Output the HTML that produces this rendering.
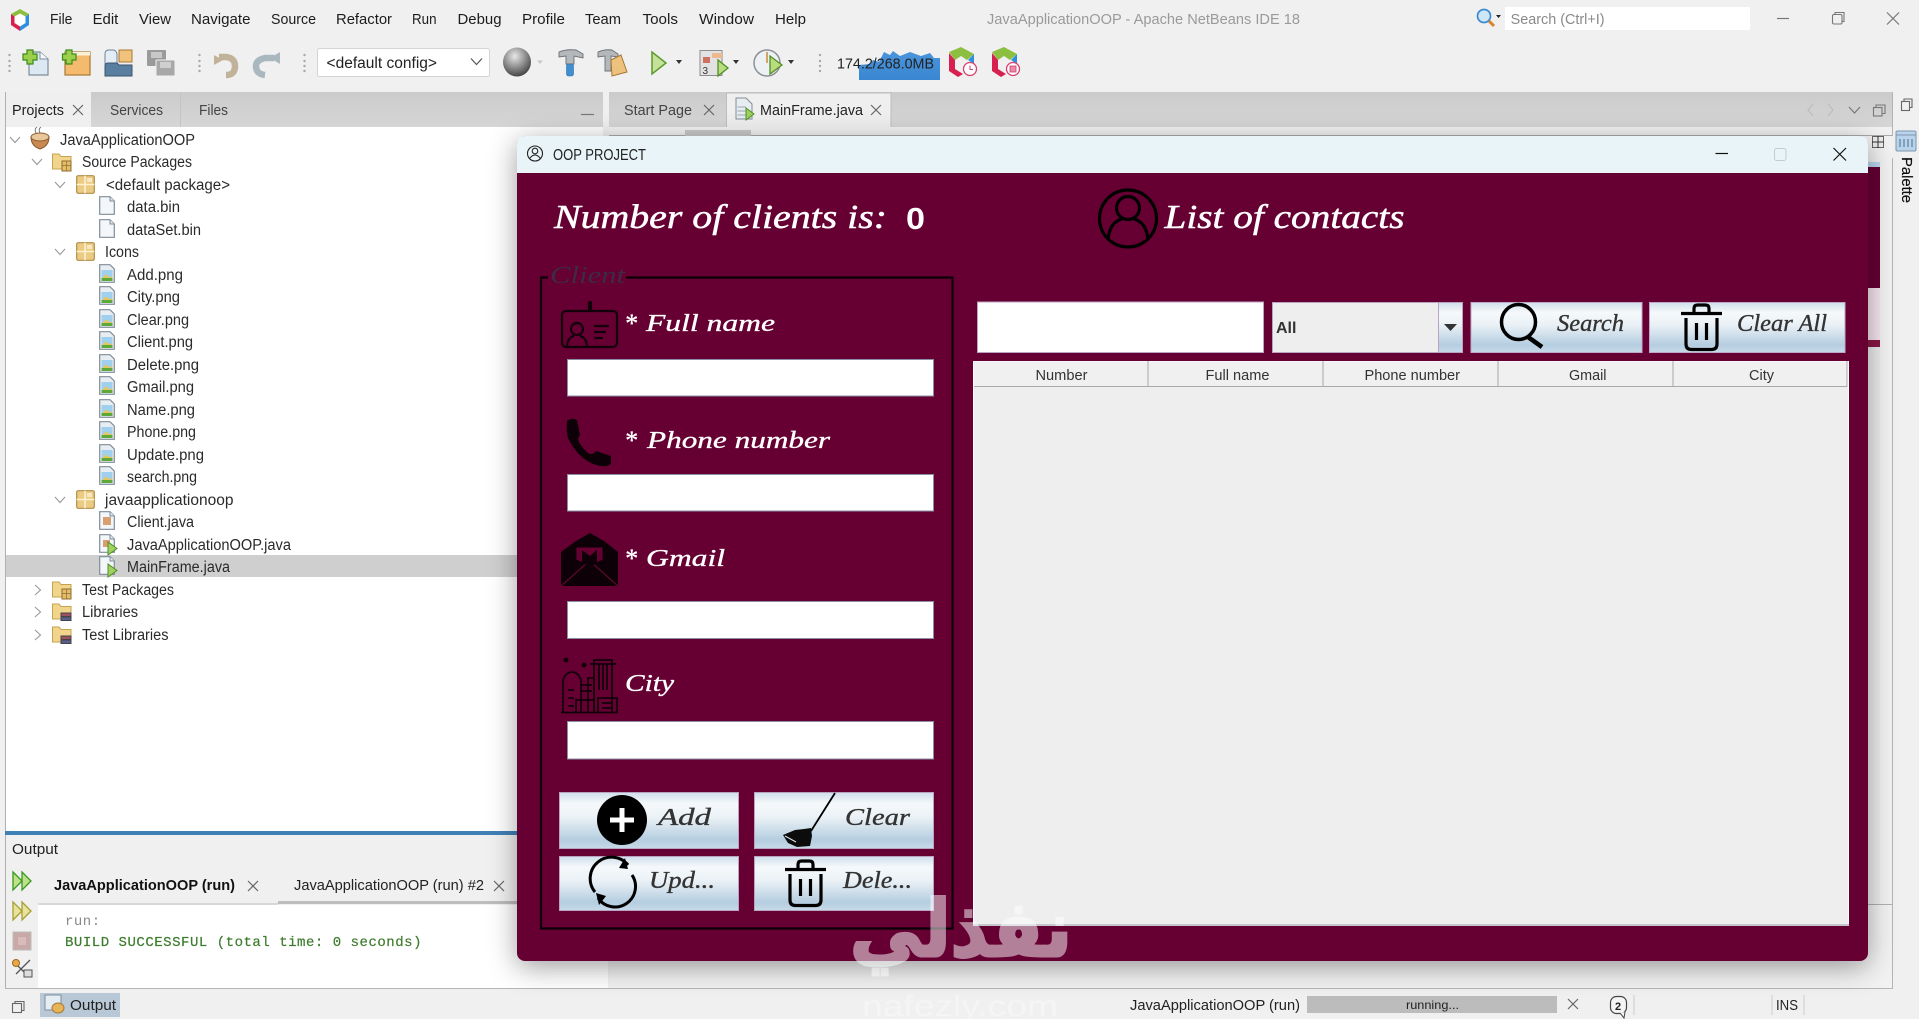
<!DOCTYPE html>
<html><head><meta charset="utf-8"><title>OOP PROJECT</title>
<style>
html,body{margin:0;padding:0;width:1919px;height:1019px;overflow:hidden;background:#f0f0f0}
svg{position:absolute;left:0;top:0;display:block}
text{font-family:"Liberation Sans",sans-serif;font-size:15px;fill:#222;white-space:pre}
.m text,.m{font-size:15px;fill:#1c1c1c}
.t{font-size:15.5px;fill:#2a2a2a}
.h{font-family:"Liberation Serif",serif;font-style:italic;fill:#fff;font-size:34px;stroke:#fff;stroke-width:.5px}
.l{font-family:"Liberation Serif",serif;font-style:italic;fill:#fff;font-size:24px;stroke:#fff;stroke-width:.35px}
.b{font-family:"Liberation Serif",serif;font-style:italic;fill:#333;font-size:24px;stroke:#333;stroke-width:.35px}
.th{font-size:15px;fill:#333}
.mono{font-family:"Liberation Mono",monospace;font-size:14px;letter-spacing:.5px}
</style></head><body>
<svg width="1919" height="1019" viewBox="0 0 1919 1019" xmlns="http://www.w3.org/2000/svg">
<defs>
<linearGradient id="btn" x1="0" y1="0" x2="0" y2="1"><stop offset="0" stop-color="#cfdfea"/><stop offset=".2" stop-color="#f6f9fb"/><stop offset=".45" stop-color="#eaf1f6"/><stop offset=".85" stop-color="#b4cde0"/><stop offset="1" stop-color="#c8dae8"/></linearGradient>
<linearGradient id="tab" x1="0" y1="0" x2="0" y2="1"><stop offset="0" stop-color="#cbcbcb"/><stop offset="1" stop-color="#d6d6d6"/></linearGradient>
<linearGradient id="mem" x1="0" y1="0" x2="0" y2="1"><stop offset="0" stop-color="#4a95dc"/><stop offset="1" stop-color="#3a86d0"/></linearGradient>
<radialGradient id="gl" cx=".42" cy=".3" r=".8"><stop offset="0" stop-color="#e8e8e8"/><stop offset=".5" stop-color="#8c8c8c"/><stop offset="1" stop-color="#2f2f2f"/></radialGradient>
<filter id="sh" x="-10%" y="-10%" width="120%" height="120%"><feDropShadow dx="0" dy="6" stdDeviation="14" flood-color="#000" flood-opacity=".38"/></filter>
<symbol id="x" viewBox="0 0 10 10" overflow="visible"><path d="M0 0L10 10M10 0L0 10" stroke="#666" stroke-width="1.2" fill="none"/></symbol>
<symbol id="chd" viewBox="0 0 10 6" overflow="visible"><path d="M0 0L5 5.5L10 0" stroke="#999" stroke-width="1.1" fill="none"/></symbol>
<symbol id="chr" viewBox="0 0 6 10" overflow="visible"><path d="M0 0L5.5 5L0 10" stroke="#999" stroke-width="1.1" fill="none"/></symbol>
<symbol id="file" viewBox="0 0 16 19" overflow="visible"><path d="M.7.7H11L15.3 5V18.3H.7Z" fill="#f3f7fa" stroke="#7f8c99" stroke-width="1.2"/><path d="M11 .7V5H15.3" fill="#dfe7ee" stroke="#7f8c99"/></symbol>
<symbol id="img" viewBox="0 0 16 19" overflow="visible"><path d="M.7.7H11L15.3 5V18.3H.7Z" fill="#e8edf1" stroke="#7f8c99" stroke-width="1.2"/><rect x="2.5" y="6" width="11" height="9" fill="#9fd0ef"/><path d="M2.5 15L7 10.5L11 13.5L13.5 12V15Z" fill="#e8c55a"/><rect x="2.5" y="14" width="11" height="3" fill="#5ca93a"/></symbol>
<symbol id="pkg" viewBox="0 0 19 19" overflow="visible"><rect x=".7" y=".7" width="17.6" height="17.6" rx="1.5" fill="#eccb85" stroke="#b08c44" stroke-width="1.2"/><path d="M.7 9.5H18.3M9 .7V18.3" stroke="#fff3d2" stroke-width="1.5"/><rect x="11" y="3" width="5" height="4" fill="#f8e9c4"/></symbol>
<symbol id="fold" viewBox="0 0 20 19" overflow="visible"><path d="M.5 16V1H7L9 3.5H19V16Z" fill="#f2d58c" stroke="#c6a24f"/><rect x="10" y="8" width="9" height="10" fill="#e5bd69" stroke="#8d6e2e"/><path d="M10 12.5H19M14.5 8V18" stroke="#8d6e2e" stroke-width=".7"/></symbol>
<symbol id="lib" viewBox="0 0 20 19" overflow="visible"><path d="M.5 16V1H7L9 3.5H19V16Z" fill="#f2d58c" stroke="#c6a24f"/><rect x="9" y="10" width="10" height="3.5" fill="#a05060" stroke="#444"/><rect x="9" y="14" width="10" height="3.5" fill="#556090" stroke="#444"/></symbol>
<symbol id="trash" viewBox="0 0 41 48" overflow="visible"><g fill="none" stroke="#000" stroke-width="3.2"><path d="M0 10.5H41"/><path d="M13 9V5.5Q13 2 16.5 2H24.5Q28 2 28 5.5V9"/><path d="M5 15V41Q5 46.5 10.5 46.5H30.5Q36 46.5 36 41V15"/><path d="M15.5 20V37M25.500 20V37"/></g></symbol>
</defs>

<!-- Menu bar -->
<g transform="translate(11,9)"><path d="M9 0L18 5V16L9 22L0 16V5Z" fill="#fff"/><path d="M9 0L18 5L14.5 7.5L9 4.5L3.5 7.5L0 5Z" fill="#8cbf3f"/><path d="M0 5L3.5 7.5V14L9 17.5V22L0 16Z" fill="#d8204f"/><path d="M18 5L14.5 7.5V14L9 17.5V22L18 16Z" fill="#2e8fe0"/></g>
<g class="m">
<text class="m" x="50" y="24" textLength="22.4" lengthAdjust="spacingAndGlyphs">File</text>
<text class="m" x="92.6" y="24" textLength="25.7" lengthAdjust="spacingAndGlyphs">Edit</text>
<text class="m" x="139" y="24" textLength="32" lengthAdjust="spacingAndGlyphs">View</text>
<text class="m" x="191" y="24" textLength="59.5" lengthAdjust="spacingAndGlyphs">Navigate</text>
<text class="m" x="271" y="24" textLength="45" lengthAdjust="spacingAndGlyphs">Source</text>
<text class="m" x="336" y="24" textLength="56" lengthAdjust="spacingAndGlyphs">Refactor</text>
<text class="m" x="412" y="24" textLength="24.5" lengthAdjust="spacingAndGlyphs">Run</text>
<text class="m" x="457.5" y="24" textLength="44" lengthAdjust="spacingAndGlyphs">Debug</text>
<text class="m" x="522" y="24" textLength="43" lengthAdjust="spacingAndGlyphs">Profile</text>
<text class="m" x="585" y="24" textLength="36" lengthAdjust="spacingAndGlyphs">Team</text>
<text class="m" x="642.5" y="24" textLength="35.5" lengthAdjust="spacingAndGlyphs">Tools</text>
<text class="m" x="699" y="24" textLength="55" lengthAdjust="spacingAndGlyphs">Window</text>
<text class="m" x="775" y="24" textLength="31" lengthAdjust="spacingAndGlyphs">Help</text>
</g>
<text x="987" y="24" textLength="313" lengthAdjust="spacingAndGlyphs" style="fill:#9a9a9a;font-size:15px">JavaApplicationOOP - Apache NetBeans IDE 18</text>
<g fill="none"><circle cx="1484" cy="16" r="6.5" fill="#cfe6f7" stroke="#3a8ad0" stroke-width="1.7"/><path d="M1489 21L1494 26" stroke="#d9822b" stroke-width="3"/></g><path d="M1496 15H1501L1498.5 18Z" fill="#222"/>
<rect x="1505" y="7" width="245" height="23" fill="#fff"/>
<text x="1510.6" y="24" textLength="94" lengthAdjust="spacingAndGlyphs" style="fill:#8a8a8a;font-size:15px">Search (Ctrl+I)</text>
<path d="M1777 18.5H1789" stroke="#777" stroke-width="1.2"/>
<g fill="none" stroke="#777" stroke-width="1.1"><rect x="1832.5" y="14.5" width="9.5" height="9.5" rx="1.5"/><path d="M1835 14V12.5H1844V21.5H1842.5"/></g>
<path d="M1887 12.5L1899 24.5M1899 12.5L1887 24.5" stroke="#777" stroke-width="1.2"/>

<!-- Toolbar -->
<g fill="#a8a8a8"><circle cx="9.5" cy="55" r="1.2"/><circle cx="9.5" cy="61" r="1.2"/><circle cx="9.5" cy="66" r="1.2"/><circle cx="9.5" cy="71" r="1.2"/><circle cx="199.5" cy="55" r="1.2"/><circle cx="199.5" cy="61" r="1.2"/><circle cx="199.5" cy="66" r="1.2"/><circle cx="199.5" cy="71" r="1.2"/><circle cx="304.5" cy="55" r="1.2"/><circle cx="304.5" cy="61" r="1.2"/><circle cx="304.5" cy="66" r="1.2"/><circle cx="304.5" cy="71" r="1.2"/><circle cx="820" cy="55" r="1.2"/><circle cx="820" cy="61" r="1.2"/><circle cx="820" cy="66" r="1.2"/><circle cx="820" cy="71" r="1.2"/></g>
<path d="M29 52H40L48 59V75H29Z" fill="#dde9f2" stroke="#7f8c99" stroke-width="1.2"/><path d="M40 52V59H48" fill="#f5f8fa" stroke="#7f8c99"/>
<path d="M27 50V54H23V60H27V64H33V60H37V54H33V50Z" fill="#9ccf4a" stroke="#3c8a1f" stroke-width="1.2"/>
<rect x="65" y="52" width="25" height="23" fill="#f4bb6e" stroke="#a97733" stroke-width="1.2"/><rect x="65" y="52" width="25" height="3.5" fill="#f8f0d8"/>
<path d="M66 50V54H62.5V60H66V64H72V60H76V54H72V50Z" fill="#9ccf4a" stroke="#3c8a1f" stroke-width="1.2"/>
<path d="M105 64V54Q105 50 109 50H113Q116 50 117 54V64Z" fill="#e3edf5" stroke="#71849a"/><rect x="119" y="50" width="13" height="12" fill="#f0c27c" stroke="#a97733"/><path d="M105 76V66Q105 63 108 63H117L119 65H132V76Z" fill="#5a7ea0" stroke="#3c5470"/>
<rect x="147" y="50" width="19" height="16" rx="1" fill="#9a9a9a"/><rect x="151" y="52" width="11" height="6" fill="#c8c8c8"/><rect x="156" y="60" width="19" height="16" rx="1" fill="#a8a8a8" stroke="#f0f0f0"/><rect x="160" y="62" width="11" height="6" fill="#cfcfcf"/>
<path d="M214 55L214 65L223 60Z" fill="#c0b39a"/><path d="M219 57H226Q235 58 235 66Q235 75 226 75" fill="none" stroke="#c0b39a" stroke-width="6.5"/>
<path d="M280 52V64L270 58Z" fill="#a9b7bf"/><path d="M274 58H265Q256 60 256 66Q256 74 265 75" fill="none" stroke="#a9b7bf" stroke-width="6.5"/>
<rect x="317.5" y="48.5" width="172" height="28" rx="2" fill="#fff" stroke="#d4d4d4"/>
<text x="326.5" y="68" textLength="110.5" lengthAdjust="spacingAndGlyphs" style="font-size:15.5px;fill:#222">&lt;default config&gt;</text>
<path d="M471 58.5L476.5 64.5L482 58.5" fill="none" stroke="#555" stroke-width="1.2"/>
<ellipse cx="517" cy="62" rx="14" ry="14.5" fill="url(#gl)"/><path d="M537 60.5H543L540 64Z" fill="#c8c8c8"/>
<path d="M559 52Q566 49 576 50L583 54V58L574 56V64H566V56L559 57Z" fill="#b4b8bb" stroke="#6b7075" stroke-width=".9"/><rect x="566.5" y="64" width="7" height="12" rx="2" fill="#3f8fd2" stroke="#2f6f9f" stroke-width=".6"/>
<path d="M598 52Q605 49 612 50L618 54V57L611 56V71H605V56L598 57Z" fill="#b4b8bb" stroke="#6b7075" stroke-width=".9"/><path d="M611 60L621 55L627 72L612 76Z" fill="#edc27e" stroke="#a97733"/>
<path d="M652 52V74L666 63Z" fill="#c6e29a" stroke="#5c9a2b" stroke-width="1.5"/>
<path d="M676 60H682L679 64Z" fill="#333"/>
<rect x="700" y="50.5" width="22" height="25" fill="#e2e2e2" stroke="#8d8d8d"/><rect x="703" y="57" width="7" height="6" fill="#d07060"/><text x="702.5" y="74" style="font-size:10px;fill:#333">3</text><rect x="712" y="53" width="10" height="5" fill="#eeb98f"/><path d="M718 60V76L728 68Z" fill="#b8dc7e" stroke="#4f8f25" stroke-width="1.3"/>
<path d="M733 60H739L736 64Z" fill="#333"/>
<circle cx="767" cy="63" r="13" fill="#edf1f4" stroke="#8c9196" stroke-width="1.5"/><path d="M767 52V63" stroke="#c98a3c" stroke-width="1.5"/><path d="M770 56V74L782 65Z" fill="#b8dc7e" stroke="#4f8f25" stroke-width="1.3"/>
<path d="M788 60H794L791 64Z" fill="#333"/>
<path d="M859 80V65L870 64L873 60L879 62L884 52L890 55L893 51L900 56L910 52L921 56L930 53L934 58L940 58V80Z" fill="url(#mem)"/>
<text x="837" y="68.5" textLength="97" lengthAdjust="spacingAndGlyphs" style="font-size:15px;fill:#222">174.2/268.0MB</text>
<g><path d="M949 52L961 47L974 54L967 60L961 56L955 60Z" fill="#8cbf3f"/><path d="M949 53L955 60V69L963 74L958 77L949 71Z" fill="#d8204f"/><path d="M974 54V64L968 60Z" fill="#2e8fe0"/><circle cx="970" cy="69" r="6.5" fill="#fff" stroke="#d8406f" stroke-width="1.3"/><path d="M970 65.5V69.5H973" fill="none" stroke="#d8406f"/></g>
<g><path d="M992 52L1004 47L1017 54L1010 60L1004 56L998 60Z" fill="#8cbf3f"/><path d="M992 53L998 60V69L1006 74L1001 77L992 71Z" fill="#d8204f"/><path d="M1017 54V64L1011 60Z" fill="#2e8fe0"/><circle cx="1013" cy="69" r="6.5" fill="#fff" stroke="#d8406f" stroke-width="1.3"/><rect x="1010" y="66" width="6" height="6" fill="#e88aa8" stroke="#d8406f" stroke-width=".8"/></g>

<!-- Left project panel -->
<rect x="6" y="92" width="597" height="35" fill="url(#tab)"/>
<rect x="6" y="92" width="85" height="35" fill="#efefef"/>
<path d="M5.5 92V988" stroke="#b0b0b0"/>
<rect x="6" y="127" width="597" height="704" fill="#fff"/>
<text x="12" y="115" textLength="52" lengthAdjust="spacingAndGlyphs" style="font-size:15px">Projects</text>
<use href="#x" x="73" y="105" width="10" height="10"/>
<path d="M180.5 92V127" stroke="#c4c4c4"/>
<text x="110" y="115" textLength="53" lengthAdjust="spacingAndGlyphs" style="font-size:15px;fill:#444">Services</text>
<text x="199" y="115" textLength="29" lengthAdjust="spacingAndGlyphs" style="font-size:15px;fill:#444">Files</text>
<path d="M581 114.5H594" stroke="#777" stroke-width="1.2"/>

<!-- Right editor area -->
<rect x="609" y="92" width="1284" height="35" fill="url(#tab)"/>
<rect x="609" y="127" width="1284" height="861" fill="#f2f2f2"/>
<path d="M609 135.5H1893" stroke="#aaa"/><rect x="685" y="130" width="66" height="6" fill="#c9c9c9"/>
<text x="624" y="115" textLength="68" lengthAdjust="spacingAndGlyphs" style="font-size:15px;fill:#444">Start Page</text>
<use href="#x" x="704" y="105" width="10" height="10"/>
<path d="M726.5 127V93H891V127" fill="#efefef" stroke="#bdbdbd"/>
<path d="M736 98H746L752 104V119H736Z" fill="#e8edf1" stroke="#7f8c99"/><path d="M737.5 107H746M737.5 111H746M737.5 115H746" stroke="#9aa6b2"/><path d="M746 108V120L754 114Z" fill="#a0d060" stroke="#4f8f25"/>
<text x="760" y="115" textLength="103" lengthAdjust="spacingAndGlyphs" style="font-size:15px">MainFrame.java</text>
<use href="#x" x="871" y="105" width="10" height="10"/>
<g fill="none" stroke="#bcbcbc" stroke-width="1.2"><path d="M1813 104L1808 110L1813 116"/><path d="M1828 104L1833 110L1828 116"/></g>
<path d="M1849 107L1854.5 113L1860 107" fill="none" stroke="#777" stroke-width="1.2"/>
<g fill="none" stroke="#777" stroke-width="1.1"><rect x="1873.5" y="107.5" width="8.500" height="8.5"/><path d="M1876 107V105H1885V113.5H1882"/></g>
<path d="M1892.5 92V988" stroke="#b4b4b4"/>
<rect x="1893" y="92" width="26" height="927" fill="#f0f0f0"/>
<g fill="none" stroke="#666" stroke-width="1.1"><rect x="1901.5" y="101.5" width="8" height="9"/><path d="M1904 101V99H1912V107.5H1910"/></g>
<rect x="1896" y="131" width="20" height="20" rx="1.5" fill="#b9d4ea" stroke="#7a96ae"/><path d="M1896 135H1916" stroke="#7a96ae"/><path d="M1900 139V147M1904 139V147M1908 139V147M1912 139V147" stroke="#48708e"/>
<text transform="translate(1902,157) rotate(90)" textLength="46" lengthAdjust="spacingAndGlyphs" style="font-size:15px;fill:#111;stroke:#111;stroke-width:.2px">Palette</text>
<rect x="1873" y="136" width="20" height="22" fill="#f2f2f2"/>
<rect x="1872.5" y="136.5" width="11" height="11" fill="#eee" stroke="#666"/><path d="M1878 136V148M1872 142H1884" stroke="#333"/>

<!-- Sliver behind window -->
<rect x="1868" y="162" width="12" height="5" fill="#bcd8f0"/>
<rect x="1868" y="167" width="12" height="121" fill="#660033"/>
<rect x="1868" y="288" width="12" height="52" fill="#f7e7ee"/>
<rect x="1868" y="340" width="12" height="7" fill="#8a1744"/>
<rect x="1868" y="347" width="12" height="557" fill="#efefef"/>
<path d="M1868 904.5H1892" stroke="#b0b0b0"/>

<!-- Tree -->
<g class="t">
<use href="#chd" x="10" y="137" width="10" height="6"/><use href="#chd" x="32" y="159" width="10" height="6"/><use href="#chd" x="55" y="182" width="10" height="6"/><use href="#chd" x="55" y="249" width="10" height="6"/><use href="#chd" x="55" y="497" width="10" height="6"/>
<use href="#chr" x="35" y="585" width="6" height="10"/><use href="#chr" x="35" y="607" width="6" height="10"/><use href="#chr" x="35" y="630" width="6" height="10"/>
<g><path d="M31 137Q31 146 40 149Q49 146 49 137Z" fill="#c88a50" stroke="#8a5a2c"/><ellipse cx="40" cy="137" rx="9" ry="4" fill="#e9c79b" stroke="#8a5a2c"/><path d="M36 133Q34 129 37 127M40 133Q38 129 41 127" stroke="#777" fill="none"/></g>
<use href="#fold" x="52" y="153" width="20" height="19"/>
<use href="#pkg" x="76" y="175" width="19" height="19"/><use href="#pkg" x="76" y="242" width="19" height="19"/><use href="#pkg" x="76" y="490" width="19" height="19"/>
<use href="#file" x="99" y="196" width="16" height="19"/><use href="#file" x="99" y="219" width="16" height="19"/>
<use href="#img" x="99" y="264" width="16" height="19"/><use href="#img" x="99" y="286" width="16" height="19"/><use href="#img" x="99" y="309" width="16" height="19"/><use href="#img" x="99" y="331" width="16" height="19"/><use href="#img" x="99" y="354" width="16" height="19"/><use href="#img" x="99" y="376" width="16" height="19"/><use href="#img" x="99" y="399" width="16" height="19"/><use href="#img" x="99" y="421" width="16" height="19"/><use href="#img" x="99" y="444" width="16" height="19"/><use href="#img" x="99" y="466" width="16" height="19"/>
<rect x="6" y="555" width="511" height="22" fill="#cfcfcf"/>
<use href="#file" x="99" y="511" width="16" height="19"/><rect x="103" y="517" width="8" height="8" fill="#d8a070"/>
<use href="#file" x="99" y="534" width="16" height="19"/><rect x="103" y="540" width="7" height="7" fill="#d8a070"/><path d="M108 542V555L117 548.5Z" fill="#a0d060" stroke="#4f8f25"/>
<use href="#file" x="99" y="556" width="16" height="19"/><path d="M108 564V577L117 570.5Z" fill="#a0d060" stroke="#4f8f25"/>
<use href="#fold" x="52" y="581" width="20" height="19"/><use href="#lib" x="52" y="603" width="20" height="19"/><use href="#lib" x="52" y="626" width="20" height="19"/>
<text class="t" x="60" y="145" textLength="135" lengthAdjust="spacingAndGlyphs">JavaApplicationOOP</text>
<text class="t" x="82" y="167" textLength="110" lengthAdjust="spacingAndGlyphs">Source Packages</text>
<text class="t" x="106" y="190" textLength="124" lengthAdjust="spacingAndGlyphs">&lt;default package&gt;</text>
<text class="t" x="127" y="212" textLength="53" lengthAdjust="spacingAndGlyphs">data.bin</text>
<text class="t" x="127" y="235" textLength="74" lengthAdjust="spacingAndGlyphs">dataSet.bin</text>
<text class="t" x="105" y="257" textLength="34" lengthAdjust="spacingAndGlyphs">Icons</text>
<text class="t" x="127" y="280" textLength="56" lengthAdjust="spacingAndGlyphs">Add.png</text>
<text class="t" x="127" y="302" textLength="53" lengthAdjust="spacingAndGlyphs">City.png</text>
<text class="t" x="127" y="325" textLength="62" lengthAdjust="spacingAndGlyphs">Clear.png</text>
<text class="t" x="127" y="347" textLength="66" lengthAdjust="spacingAndGlyphs">Client.png</text>
<text class="t" x="127" y="370" textLength="72" lengthAdjust="spacingAndGlyphs">Delete.png</text>
<text class="t" x="127" y="392" textLength="67" lengthAdjust="spacingAndGlyphs">Gmail.png</text>
<text class="t" x="127" y="415" textLength="68" lengthAdjust="spacingAndGlyphs">Name.png</text>
<text class="t" x="127" y="437" textLength="69" lengthAdjust="spacingAndGlyphs">Phone.png</text>
<text class="t" x="127" y="460" textLength="77" lengthAdjust="spacingAndGlyphs">Update.png</text>
<text class="t" x="127" y="482" textLength="70" lengthAdjust="spacingAndGlyphs">search.png</text>
<text class="t" x="105" y="505" textLength="128.5" lengthAdjust="spacingAndGlyphs">javaapplicationoop</text>
<text class="t" x="127" y="527" textLength="67" lengthAdjust="spacingAndGlyphs">Client.java</text>
<text class="t" x="127" y="550" textLength="164" lengthAdjust="spacingAndGlyphs">JavaApplicationOOP.java</text>
<text class="t" x="127" y="572" textLength="103" lengthAdjust="spacingAndGlyphs">MainFrame.java</text>
<text class="t" x="82" y="595" textLength="92" lengthAdjust="spacingAndGlyphs">Test Packages</text>
<text class="t" x="82" y="617" textLength="56" lengthAdjust="spacingAndGlyphs">Libraries</text>
<text class="t" x="82" y="640" textLength="86.5" lengthAdjust="spacingAndGlyphs">Test Libraries</text>
</g>

<!-- Output panel -->
<rect x="6" y="835" width="600" height="153" fill="#f0f0f0"/>
<rect x="5" y="831" width="604" height="4" fill="#3f80b5"/>
<rect x="38" y="905" width="570" height="83" fill="#fff"/>
<rect x="38" y="903" width="240" height="2" fill="#d8d8d8"/><rect x="278" y="901" width="330" height="3" fill="#bdbdbd"/>
<path d="M5 988.5H1893" stroke="#b5b5b5"/>
<text x="12" y="854" textLength="46" lengthAdjust="spacingAndGlyphs" style="font-size:15px">Output</text>
<path d="M13 872V890L22 881ZM22 872V890L31 881Z" fill="#bfe08a" stroke="#3a9a20" stroke-width="1.3"/>
<path d="M13 902V920L22 911ZM22 902V920L31 911Z" fill="#e9e29a" stroke="#a8a036" stroke-width="1.3"/>
<rect x="13" y="932" width="18" height="18" fill="#c9a8a8" stroke="#bbb"/><rect x="18" y="937" width="8" height="8" fill="#d8bcbc"/>
<g fill="none" stroke="#555" stroke-width="1.3"><path d="M16 974L30 960M14 962L28 976"/></g><circle cx="16" cy="963" r="3.5" fill="#e8a848" stroke="#a06818"/><rect x="24" y="970" width="8" height="7" fill="#ddd" stroke="#555"/>
<text x="54" y="890" textLength="181" lengthAdjust="spacingAndGlyphs" style="font-size:15px;font-weight:bold;fill:#111">JavaApplicationOOP (run)</text>
<use href="#x" x="248" y="881" width="10" height="10"/>
<text x="294" y="890" textLength="190" lengthAdjust="spacingAndGlyphs" style="font-size:15px">JavaApplicationOOP (run) #2</text>
<use href="#x" x="494" y="881" width="10" height="10"/>
<text class="mono" x="65" y="925" style="fill:#8a8a8a">run:</text>
<text class="mono" x="65" y="946" textLength="357" lengthAdjust="spacingAndGlyphs" style="fill:#3c7c2c;stroke:#3c7c2c;stroke-width:.2px">BUILD SUCCESSFUL (total time: 0 seconds)</text>

<!-- Status bar -->
<g fill="none" stroke="#666" stroke-width="1.1"><rect x="12.5" y="1003.5" width="9" height="9"/><path d="M15 1003V1001.5H24V1010.5H22"/></g>
<rect x="40" y="993" width="80" height="24" fill="#b9c8d6"/>
<rect x="45" y="995" width="16" height="15" fill="#e4edf3" stroke="#7f8c99"/><ellipse cx="58" cy="1008" rx="6" ry="5" fill="#e8b458" stroke="#a97733"/>
<text x="70" y="1010" textLength="46" lengthAdjust="spacingAndGlyphs" style="font-size:15px">Output</text>
<text x="1130" y="1010" textLength="170" lengthAdjust="spacingAndGlyphs" style="font-size:15px">JavaApplicationOOP (run)</text>
<rect x="1307" y="996" width="250" height="17" fill="#bcbcbc"/>
<text x="1406" y="1009" textLength="53" lengthAdjust="spacingAndGlyphs" style="font-size:12px">running...</text>
<use href="#x" x="1568" y="999" width="10" height="10"/>
<rect x="1610.5" y="996.5" width="16" height="17" rx="6" fill="#f4f4f4" stroke="#444" stroke-width="1.2"/><path d="M1620 1013L1624 1018L1625 1012" fill="#f4f4f4" stroke="#444"/>
<text x="1615" y="1010" style="font-size:11px;font-weight:bold;fill:#222">2</text>
<path d="M1634 995V1015M1772 995V1015M1804 995V1015" stroke="#ccc"/>
<text x="1776" y="1010" textLength="22" lengthAdjust="spacingAndGlyphs" style="font-size:15px">INS</text>

<!-- App window -->
<rect x="517" y="136" width="1351" height="825" rx="8" fill="#660033" filter="url(#sh)"/>
<path d="M517 173V144Q517 136 525 136H1860Q1868 136 1868 144V173Z" fill="#e8f4f8"/>
<g fill="none" stroke="#222" stroke-width="1.1"><circle cx="535" cy="153.5" r="7.5"/><circle cx="535" cy="151" r="2.8"/><path d="M529.5 158.5Q535 151.5 540.5 158.5"/></g>
<text x="553" y="160" textLength="93" lengthAdjust="spacingAndGlyphs" style="font-size:15.5px;fill:#222">OOP PROJECT</text>
<path d="M1715.5 153.5H1728" stroke="#111" stroke-width="1.2"/>
<rect x="1774.5" y="148.5" width="11.5" height="12" rx="2" fill="none" stroke="#c4ccd0"/>
<path d="M1833.5 148L1846 160.5M1846 148L1833.5 160.5" stroke="#111" stroke-width="1.2"/>

<text class="h" x="554" y="228" textLength="333" lengthAdjust="spacingAndGlyphs">Number of clients is:</text>
<text x="906" y="229" textLength="19" lengthAdjust="spacingAndGlyphs" style="font-size:31px;font-weight:bold;fill:#fff">0</text>
<g fill="none" stroke="#000" stroke-width="3.2"><circle cx="1128" cy="218.5" r="28.5"/><circle cx="1128" cy="208" r="11.5"/><path d="M1108 239Q1110 222 1122 219M1148 239Q1146 222 1134 219"/></g>
<text class="h" x="1164.5" y="228" textLength="240" lengthAdjust="spacingAndGlyphs">List of contacts</text>

<!-- Client group -->
<path d="M548 277.5H541V928.5H952.5V277.5H626" fill="none" stroke="#0c0008" stroke-width="2.2"/>
<text x="550" y="283" textLength="75" lengthAdjust="spacingAndGlyphs" style="font-family:'Liberation Serif',serif;font-style:italic;font-size:24px;fill:#3d2b45">Client</text>

<g fill="none" stroke="#12000a" stroke-width="2.2"><rect x="562" y="311" width="55" height="36" rx="4"/><path d="M589 311V303Q589 302 590 302T591 303V311"/><circle cx="577" cy="329" r="6"/><path d="M567 346Q568 337 574 336M587 346Q586 337 580 336M594 326H609M594 332H606M594 338H603"/></g>
<text class="l" x="624" y="332" style="font-size:26px">*</text><text class="l" x="646" y="331" textLength="129" lengthAdjust="spacingAndGlyphs">Full name</text>
<rect x="567.5" y="359.5" width="366" height="36.5" fill="#fff" stroke="#8b8fa5"/>

<path d="M567 421Q572 417 577 420L580 435Q577 438 579 442Q585 452 590 454Q594 454 596 451L611 456V464Q606 468 596 465Q578 459 568 438Q566 430 567 421Z" fill="#0e0007"/>
<text class="l" x="624" y="449" style="font-size:26px">*</text><text class="l" x="647" y="448" textLength="183" lengthAdjust="spacingAndGlyphs">Phone number</text>
<rect x="567.5" y="474.5" width="366" height="36.5" fill="#fff" stroke="#8b8fa5"/>

<path d="M561 552L576 541L590 533L604 541L618 552V586H561Z" fill="#0e0007"/><path d="M561 586L587 563M618 586L592 563" stroke="#5a0a2c" stroke-width="1.2"/><path d="M576 547H603V560L590 566L576 560Z" fill="#660033" stroke="#0e0007"/><path d="M582 562V550L590 556L597 550V562L590 568Z" fill="#0e0007"/>
<text class="l" x="624" y="567" style="font-size:26px">*</text><text class="l" x="646" y="566" textLength="79" lengthAdjust="spacingAndGlyphs">Gmail</text>
<rect x="567.5" y="601.5" width="366" height="37" fill="#fff" stroke="#8b8fa5"/>

<g fill="none" stroke="#12000a" stroke-width="1.8"><path d="M561 712.5H618M563 712V680Q566 672 572 672Q578 672 581 680V712M594 712V660H612V712M590 664H616M599 664V690M603 664V690M607 664V690M588 712V678H594M576 712V700H594V712M598 712V698H617V712"/><path d="M568 690H574M568 698H574M568 706H574M580 685H592M580 691H592M602 703H613M602 708H613"/></g><circle cx="566" cy="660" r="2.5" fill="#12000a"/><circle cx="584" cy="665" r="2.5" fill="#12000a"/>
<text class="l" x="625" y="691" textLength="49" lengthAdjust="spacingAndGlyphs">City</text>
<rect x="567.5" y="721.5" width="366" height="37.5" fill="#fff" stroke="#8b8fa5"/>

<!-- Form buttons -->
<rect x="559.5" y="792.5" width="179" height="56" fill="url(#btn)" stroke="#b9a3c0"/>
<rect x="754.5" y="792.5" width="179" height="56" fill="url(#btn)" stroke="#b9a3c0"/>
<rect x="559.5" y="856.5" width="179" height="54" fill="url(#btn)" stroke="#b9a3c0"/>
<rect x="754.5" y="856.5" width="179" height="54" fill="url(#btn)" stroke="#b9a3c0"/>
<circle cx="622" cy="820" r="25" fill="#000"/><path d="M622 808V832M610 820H634" stroke="#fff" stroke-width="5"/>
<text class="b" x="658" y="825" textLength="53" lengthAdjust="spacingAndGlyphs">Add</text>
<path d="M835 793L811 831" stroke="#000" stroke-width="1.8"/><path d="M783 835L795 830L804 829L811 828L812 836L810 846L797 847L788 843Z" fill="#0c0c0c"/><path d="M785 836L796 842" stroke="#dfe9f0"/>
<text class="b" x="845" y="825" textLength="65" lengthAdjust="spacingAndGlyphs">Clear</text>
<g fill="none" stroke="#000" stroke-width="3"><path d="M628 865A20.5 20.5 0 0 0 595 892"/><path d="M598 898A20.5 20.5 0 0 0 632 875"/></g><path d="M625 858L628 869L619 868Z M596 893L599 905L606 896Z" fill="#000"/>
<text class="b" x="649" y="888" textLength="66" lengthAdjust="spacingAndGlyphs">Upd...</text>
<use href="#trash" x="785" y="859" width="41" height="48"/>
<text class="b" x="843" y="888" textLength="69" lengthAdjust="spacingAndGlyphs">Dele...</text>

<!-- Right controls -->
<rect x="977.5" y="302" width="286" height="50.5" fill="#fff" stroke="#b9a3c0"/>
<rect x="1272.5" y="302.5" width="190" height="50" fill="#eeeeee" stroke="#b9a3c0"/>
<rect x="1438.5" y="302.5" width="24" height="50" fill="url(#btn)" stroke="#b9a3c0"/>
<path d="M1444 324H1457L1450.5 331Z" fill="#333"/>
<text x="1276" y="333" style="font-size:16px;font-weight:bold;fill:#333">All</text>
<rect x="1471" y="302.5" width="171" height="50" fill="url(#btn)" stroke="#c0a9c8"/>
<rect x="1649.5" y="302.5" width="195.5" height="50" fill="url(#btn)" stroke="#c0a9c8"/>
<ellipse cx="1518.5" cy="322" rx="17" ry="17.5" fill="none" stroke="#000" stroke-width="3.5"/><path d="M1528 337L1542 347" stroke="#000" stroke-width="4.5"/>
<text class="b" x="1557" y="331" textLength="67" lengthAdjust="spacingAndGlyphs">Search</text>
<use href="#trash" x="1681" y="303" width="41" height="48"/>
<text class="b" x="1737" y="331" textLength="90" lengthAdjust="spacingAndGlyphs">Clear All</text>

<!-- Table -->
<rect x="973" y="361" width="876" height="565" fill="#fff"/>
<rect x="974" y="387" width="874" height="537" fill="#eeeeee"/>
<path d="M973 925H1849" stroke="#8a8f9c"/>
<rect x="974" y="361.5" width="873.5" height="25" fill="#f0f0f0"/>
<path d="M974 386.5H1847.5M1148 361V387M1323 361V387M1498 361V387M1673 361V387M1847 361V387" stroke="#a9a9a9"/>
<text class="th" x="1035.5" y="380" textLength="52" lengthAdjust="spacingAndGlyphs">Number</text>
<text class="th" x="1205.5" y="380" textLength="64" lengthAdjust="spacingAndGlyphs">Full name</text>
<text class="th" x="1364.5" y="380" textLength="95.5" lengthAdjust="spacingAndGlyphs">Phone number</text>
<text class="th" x="1569" y="380" textLength="37.5" lengthAdjust="spacingAndGlyphs">Gmail</text>
<text class="th" x="1749" y="380" textLength="25" lengthAdjust="spacingAndGlyphs">City</text>

<!-- Watermark -->
<text x="1072" y="956" text-anchor="start" direction="rtl" textLength="222" lengthAdjust="spacingAndGlyphs" opacity=".5" style="font-family:'DejaVu Sans',sans-serif;font-weight:bold;font-size:78px;fill:#fff;stroke:#fff;stroke-width:3px">نفذلي</text>
<text x="862" y="1016" textLength="196" lengthAdjust="spacingAndGlyphs" opacity=".35" style="font-size:30px;fill:#fff">nafezly.com</text>
</svg>
</body></html>
